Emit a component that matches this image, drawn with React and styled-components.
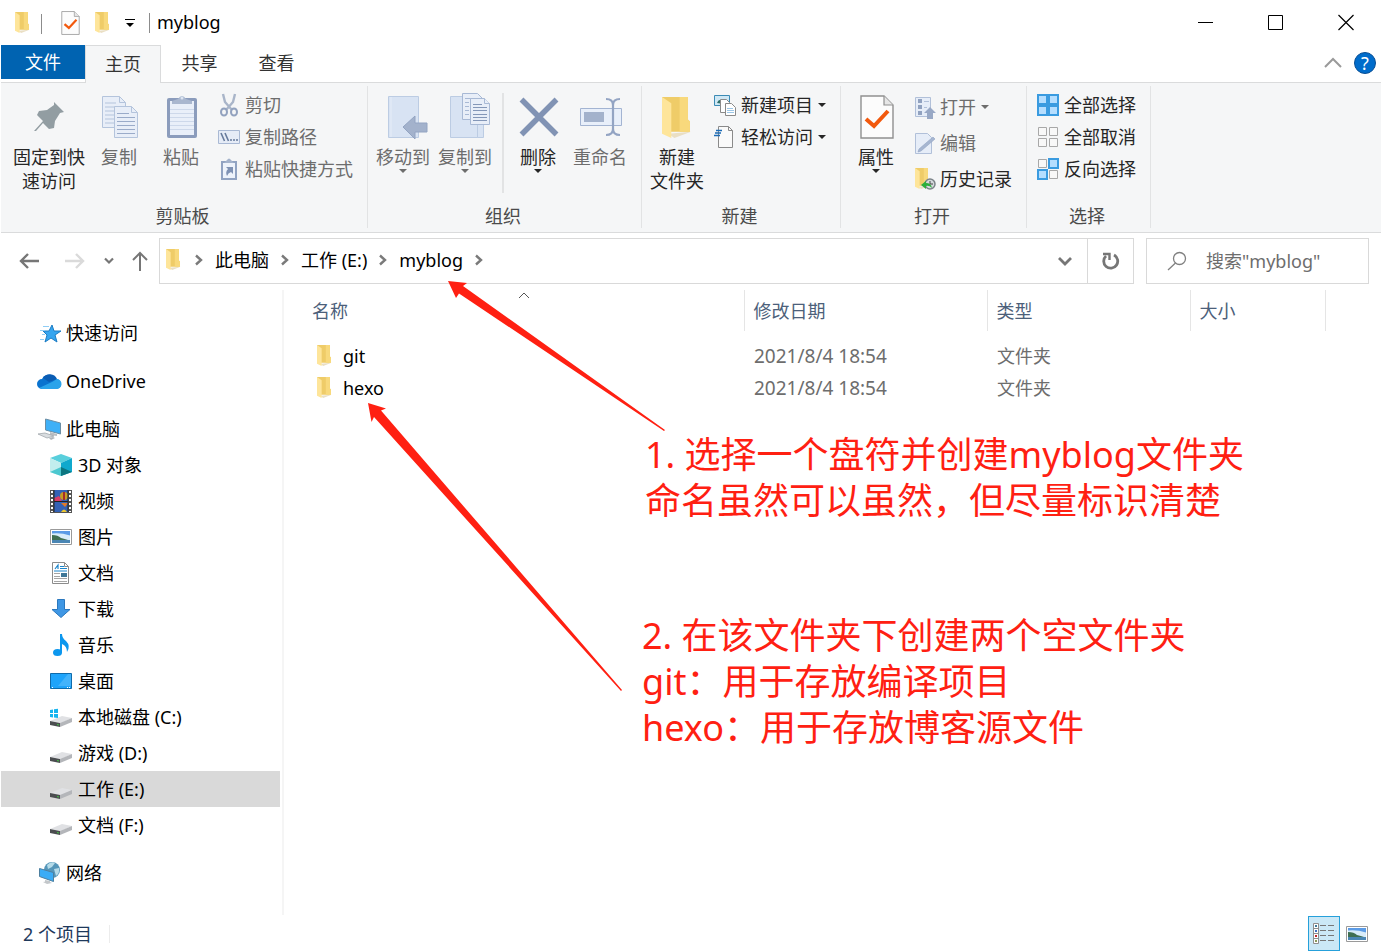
import React from 'react'
import styled, { createGlobalStyle, css } from 'styled-components'

const App = () => {
  return (
    <>
      <GlobalStyle />
      <Window>
        <TitleBar />
        <Tabs />
        <Ribbon />
        <AddressRow />
        <Body>
          <Sidebar />
          <FileList />
        </Body>
        <StatusBar />
        <Annotations />
      </Window>
    </>
  )
}

export default App

/* ---------- title bar ---------- */

const TitleBar = () => (
  <Title>
    <QuickAccess>
      <Folder width="15" height="22" />
      <Separator />
      <IconButton aria-label="属性" $width={19}><PropertiesIcon width="19" height="24" /></IconButton>
      <IconButton aria-label="新建文件夹" $width={15}><Folder width="15" height="22" /></IconButton>
      <IconButton aria-label="自定义快速访问工具栏" $width={10}>
        <svg width="10" height="10" viewBox="0 0 10 10">
          <path d="M0 1.5h10" stroke="#000" />
          <path d="M1 5h8L5 9z" />
        </svg>
      </IconButton>
    </QuickAccess>
    <Separator />
    <WindowName>myblog</WindowName>
    <WindowControls>
      <WindowButton aria-label="最小化">
        <svg width="16" height="16" viewBox="0 0 16 16"><path d="M0 8.5h15" stroke="#000" /></svg>
      </WindowButton>
      <WindowButton aria-label="最大化">
        <svg width="16" height="16" viewBox="0 0 16 16"><path d="M.5 1.5h14v14H.5z" fill="none" stroke="#000" /></svg>
      </WindowButton>
      <WindowButton aria-label="关闭">
        <svg width="16" height="16" viewBox="0 0 16 16"><path d="M.5 1l15 15M15.5 1l-15 15" stroke="#000" strokeWidth="1.2" /></svg>
      </WindowButton>
    </WindowControls>
  </Title>
)

const Tabs = () => (
  <TabRow>
    <FileTab>文件</FileTab>
    <Tab $active>主页</Tab>
    <Tab>共享</Tab>
    <Tab>查看</Tab>
    <TabTools>
      <IconButton aria-label="最小化功能区" $width={18}>
        <svg width="18" height="12" viewBox="0 0 18 12"><path d="M1 10l8-8 8 8" fill="none" stroke="#9a9a9a" strokeWidth="2" /></svg>
      </IconButton>
      <HelpButton aria-label="帮助">?</HelpButton>
    </TabTools>
  </TabRow>
)

/* ---------- ribbon ---------- */

const Big = ({ icon, label, second, arrow, disabled, width = 62 }) => (
  <BigButton disabled={disabled} $width={width}>
    <BigIcon width="48" height="48" viewBox="0 0 48 48">{icon}</BigIcon>
    <span>{label}</span>
    {second && <span>{second}</span>}
    {arrow && <Caret />}
  </BigButton>
)

const Small = ({ icon, label, arrow, disabled }) => (
  <SmallButton disabled={disabled}>
    <svg width="22" height="22" viewBox="0 0 22 22">{icon}</svg>
    <span>{label}</span>
    {arrow && <Caret />}
  </SmallButton>
)

const Caret = () => (
  <svg width="8" height="4" viewBox="0 0 8 4"><path d="M0 0h8L4 4z" fill="currentColor" /></svg>
)

const Ribbon = () => (
  <RibbonBar>
    <Group>
      <GroupBody $indent={9}>
        <Big width={78} icon={pinIcon} label="固定到快" second="速访问" />
        <Big disabled icon={copyIcon} label="复制" />
        <Big disabled icon={pasteIcon} label="粘贴" />
        <SmallColumn>
          <Small disabled icon={cutIcon} label="剪切" />
          <Small disabled icon={copyPathIcon} label="复制路径" />
          <Small disabled icon={shortcutIcon} label="粘贴快捷方式" />
        </SmallColumn>
      </GroupBody>
      <GroupName>剪贴板</GroupName>
    </Group>
    <Group>
      <GroupBody>
        <Big disabled arrow icon={moveToIcon} label="移动到" />
        <Big disabled arrow icon={copyToIcon} label="复制到" />
        <GroupDivider />
        <Big arrow icon={deleteIcon} label="删除" />
        <Big disabled icon={renameIcon} label="重命名" />
      </GroupBody>
      <GroupName>组织</GroupName>
    </Group>
    <Group>
      <GroupBody>
        <Big icon={newFolderIcon} label="新建" second="文件夹" />
        <SmallColumn>
          <Small arrow icon={newItemIcon} label="新建项目" />
          <Small arrow icon={easyAccessIcon} label="轻松访问" />
        </SmallColumn>
      </GroupBody>
      <GroupName>新建</GroupName>
    </Group>
    <Group>
      <GroupBody>
        <Big arrow icon={<PropertiesIcon x="8" y="2" width="34" height="44" />} label="属性" />
        <SmallColumn $loose>
          <Small disabled arrow icon={openIcon} label="打开" />
          <Small disabled icon={editIcon} label="编辑" />
          <Small icon={historyIcon} label="历史记录" />
        </SmallColumn>
      </GroupBody>
      <GroupName>打开</GroupName>
    </Group>
    <Group>
      <GroupBody>
        <SmallColumn>
          <Small icon={<Tiles on={[1, 1, 1, 1]} />} label="全部选择" />
          <Small icon={<Tiles on={[0, 0, 0, 0]} />} label="全部取消" />
          <Small icon={<Tiles on={[0, 1, 1, 0]} />} label="反向选择" />
        </SmallColumn>
      </GroupBody>
      <GroupName>选择</GroupName>
    </Group>
  </RibbonBar>
)

/* ---------- address bar ---------- */

const Crumb = () => (
  <svg width="8" height="12" viewBox="0 0 8 12"><path d="M1 1.5L6 6l-5 4.5" fill="none" stroke="#7a7a7a" strokeWidth="2.4" /></svg>
)

const AddressRow = () => (
  <Address>
    <NavButtons>
      <IconButton aria-label="后退" $width={21}>
        <svg width="21" height="18" viewBox="0 0 21 18"><path d="M20 9H2M9 2L2 9l7 7" fill="none" stroke="#767676" strokeWidth="2.4" /></svg>
      </IconButton>
      <IconButton aria-label="前进" $width={21}>
        <svg width="21" height="18" viewBox="0 0 21 18"><path d="M1 9h18M12 2l7 7-7 7" fill="none" stroke="#dadada" strokeWidth="2.4" /></svg>
      </IconButton>
      <IconButton aria-label="最近浏览的位置" $width={10}>
        <svg width="10" height="8" viewBox="0 0 10 8"><path d="M1 1.5l4 4 4-4" fill="none" stroke="#767676" strokeWidth="2.2" /></svg>
      </IconButton>
      <IconButton aria-label="上移" $width={18}>
        <svg width="18" height="20" viewBox="0 0 18 20"><path d="M9 20V2M2 9l7-7 7 7" fill="none" stroke="#767676" strokeWidth="2" /></svg>
      </IconButton>
    </NavButtons>
    <AddressBox>
      <Crumbs aria-label="路径">
        <Folder width="15" height="22" />
        <Crumb />
        <CrumbLink href="#pc">此电脑</CrumbLink>
        <Crumb />
        <CrumbLink href="#e">工作 (E:)</CrumbLink>
        <Crumb />
        <CrumbLink href="#myblog">myblog</CrumbLink>
        <Crumb />
      </Crumbs>
      <IconButton aria-label="历史地址" $width={44}>
        <svg width="14" height="10" viewBox="0 0 14 10"><path d="M1 2l6 6 6-6" fill="none" stroke="#767676" strokeWidth="2.8" /></svg>
      </IconButton>
      <Refresh aria-label="刷新">
        <svg width="18" height="18" viewBox="0 0 18 18">
          <path d="M12 3a7 7 0 1 1-8 1" fill="none" stroke="#767676" strokeWidth="2.8" />
          <path d="M1 2h6.5v6" fill="none" stroke="#767676" strokeWidth="2.4" />
        </svg>
      </Refresh>
    </AddressBox>
    <SearchBox>
      <svg width="20" height="20" viewBox="0 0 20 20">
        <circle cx="12.5" cy="7.5" r="6" fill="none" stroke="#808080" strokeWidth="1.3" />
        <path d="M8.500 12L1 19" stroke="#808080" strokeWidth="1.3" />
      </svg>
      <SearchInput aria-label="搜索" placeholder={'搜索"myblog"'} />
    </SearchBox>
  </Address>
)

/* ---------- sidebar ---------- */

const Sidebar = () => (
  <Nav aria-label="导航窗格">
    {places.map(group => (
      <NavGroup key={group[0].name}>
        {group.map((place, i) => (
          <Place key={place.name} href={`#${place.name}`} $nested={i > 0} $active={place.active}>
            <svg width="24" height="24" viewBox="0 0 24 24">{place.icon}</svg>
            {place.name}
          </Place>
        ))}
      </NavGroup>
    ))}
  </Nav>
)

/* ---------- file list ---------- */

const files = [
  { name: 'git', date: '2021/8/4 18:54', type: '文件夹' },
  { name: 'hexo', date: '2021/8/4 18:54', type: '文件夹' },
]

const FileList = () => (
  <Main>
    <Table>
      <colgroup>
        <Col $width={460} />
        <Col $width={243} />
        <Col $width={203} />
        <Col $width={135} />
        <col />
      </colgroup>
      <thead>
        <tr>
          <HeadCell $first>
            名称
            <SortMark width="12" height="7" viewBox="0 0 12 7"><path d="M1 6l5-5 5 5" fill="none" stroke="#555" /></SortMark>
          </HeadCell>
          <HeadCell>修改日期</HeadCell>
          <HeadCell>类型</HeadCell>
          <HeadCell>大小</HeadCell>
          <td />
        </tr>
      </thead>
      <tbody>
        <SpacerRow><td colSpan="5" /></SpacerRow>
        {files.map(file => (
          <tr key={file.name}>
            <NameCell>
              <FileName><Folder width="15" height="22" />{file.name}</FileName>
            </NameCell>
            <DateCell>{file.date}</DateCell>
            <Cell>{file.type}</Cell>
            <Cell />
            <td />
          </tr>
        ))}
      </tbody>
    </Table>
  </Main>
)

const StatusBar = () => (
  <Status>
    <Count>2 个项目</Count>
    <ViewButtons>
      <ViewButton aria-label="详细信息" $active>
        <svg width="22" height="22" viewBox="0 0 22 22">
          <path d="M.5.5h5v20h-5zM.5 5.5h5M.5 10.5h5M.5 15.5h5" fill="#fff" stroke="#8e8e8e" />
          <path d="M2 2h2v2H2z" fill="#3b7a9a" /><path d="M2 7h2v2H2z" fill="#3f6fc0" />
          <path d="M2 12h2v2H2z" fill="#c0272d" /><path d="M2 17h2v2H2z" fill="#8a9a5a" />
          <path d="M7 2.500h6M15 2.500h6M7 7.500h6M15 7.500h6M7 12.500h6M15 12.500h6M7 17.500h6M15 17.500h6" stroke="#777" />
        </svg>
      </ViewButton>
      <ViewButton aria-label="大图标">
        <svg width="22" height="16" viewBox="1 4 22 16">{photoIcon}</svg>
      </ViewButton>
    </ViewButtons>
  </Status>
)

const Annotations = () => (
  <>
    <Arrow $left={440} $top={270} width="240" height="180" viewBox="440 270 240 180">
      <path d="M448 281L467 283L463 286L665 430L664 431L459 293.5L456 298Z" />
    </Arrow>
    <Arrow $left={360} $top={395} width="280" height="310" viewBox="360 395 280 310">
      <path d="M368 403L386 408.500L381 410.500L622 690L621 691L374 417L371.500 422Z" />
    </Arrow>
    <Note $left={645} $top={432}>
      1. 选择一个盘符并创建myblog文件夹<br />
      命名虽然可以虽然，但尽量标识清楚
    </Note>
    <Note $left={642} $top={613}>
      2. 在该文件夹下创建两个空文件夹<br />
      git：用于存放编译项目<br />
      hexo：用于存放博客源文件
    </Note>
  </>
)

/* ---------- icons ---------- */

const Folder = props => (
  <svg viewBox="0 0 29 42" preserveAspectRatio="none" {...props}>
    <path d="M6 36l22-2-16 6z" fill="#eadfc4" />
    <path d="M0 0h25v22l2 2v10H5z" fill="#efcc68" />
    <path d="M17 0h8v22l2 2v10H17z" fill="#f8d97c" />
    <path d="M0 0l9 6v34L0 36z" fill="#fee59a" />
  </svg>
)

const PropertiesIcon = props => (
  <svg viewBox="0 0 34 44" {...props}>
    <path d="M1 1h23l9 9v33H1z" fill="#fcfcfc" stroke="#909090" strokeWidth="1.4" />
    <path d="M24 1v9h9" fill="#e6e6e6" stroke="#909090" strokeWidth="1.2" />
    <path d="M6 24l8 7 14-15" fill="none" stroke="#f2590d" strokeWidth="4" />
  </svg>
)

const Tiles = ({ on }) => on.map((lit, i) => {
  const x = (i % 2) * 11
  const y = i > 1 ? 11 : 0
  return lit
    ? <path key={i} d={`M${x + 1} ${y + 1}h9v9h-9z`} fill="#b5deff" stroke="#3a9be0" strokeWidth="2" />
    : <path key={i} d={`M${x + 1.5} ${y + 1.5}h8v8h-8z`} fill="#f8f8f8" stroke="#a8a8a8" />
})

const pinIcon = (
  <path d="M29 9l10 10-4 1-5 8-1 7-5 1-6-6-7 8H9l9-10-6-6 2-4 8-1 7-5z" fill="#929da2" />
)

const copyIcon = (
  <g stroke="#b4c4dc">
    <path d="M7.500 3.500h17l6 6v25h-23z" fill="#e8eef8" />
    <path d="M24.500 3.500v6h6M10 10h11M10 14h14M10 18h9M10 22h9M10 26h9M10 30h9" fill="none" />
    <path d="M19.500 13.500h17l6 6v25h-23z" fill="#e8eef8" />
    <path d="M36.500 13.500v6h6" fill="none" />
    <path d="M22 20.500h12M22 24.500h18M22 28.500h18M22 32.500h18M22 36.500h18M22 40.500h18" stroke="#9aabc9" />
  </g>
)

const pasteIcon = (
  <g>
    <rect x="10" y="5" width="30" height="40" rx="2" fill="#8b9cbc" />
    <path d="M13 8h24v34H13z" fill="#e9eff9" />
    <path d="M13 16.500h24M13 20.500h24M13 24.500h24M13 28.500h24M13 32.500h24M13 36.500h24" stroke="#cdd8ea" />
    <path d="M15 11V8l6-2q4-6 8 0l6 2v3z" fill="#a9b7cf" />
    <circle cx="25" cy="5" r="1.5" fill="#dce4f0" />
  </g>
)

const cutIcon = (
  <g fill="none" stroke="#92a2bf" strokeWidth="2">
    <path d="M5 0l2 8 7 8M17 0l-2 8-7 8" stroke="#a9b5c9" strokeWidth="2.4" />
    <ellipse cx="6" cy="18" rx="3" ry="3.5" />
    <ellipse cx="16" cy="18" rx="3" ry="3.5" />
  </g>
)

const copyPathIcon = (
  <g>
    <path d="M.5 4.500h21v13H.5z" fill="#e6ecf7" stroke="#a9b9d4" />
    <path d="M3 7l3.500 8M7 7l3.500 8" stroke="#667a9c" strokeWidth="1.6" />
    <path d="M12 14h2M15 14h2M18 14h2" stroke="#667a9c" strokeWidth="1.6" />
  </g>
)

const shortcutIcon = (
  <g>
    <path d="M4 4h14v17H4z" fill="#eef3fb" stroke="#91a3c2" strokeWidth="2" />
    <path d="M6 5l3-3q2-3 4 0l3 3z" fill="#a4b3cc" />
    <path d="M8 9h7v7l-2-2q-3 1-4 4-2-4 1-7z" fill="#7f92b4" />
  </g>
)

const paleFolder = <path d="M9.500 3.500h30v41h-30z" fill="#d8e3f3" stroke="#bccce3" />

const moveToIcon = (
  <g>
    {paleFolder}
    <path d="M12 4v40" stroke="#e6edf8" />
    <path d="M24 34l12-11v7h12v9H36v7z" fill="#a3b2cc" stroke="#93a4c2" />
  </g>
)

const copyToIcon = (
  <g>
    {paleFolder}
    <path d="M36.500 25.500h6v19h-6z" fill="#d8e3f3" stroke="#bccce3" />
    <g stroke="#a8b9d5" fill="#e8eef8">
      <path d="M21.500.500h15l5 5v21h-20z" />
      <path d="M24 5.500h11M24 9.500h4M24 13.500h4M24 17.500h4M24 21.500h4" />
      <path d="M29.500 5.500h14l5 5v21h-19z" />
      <path d="M43.500 5.500v5h5" />
      <path d="M32 11.500h9M32 14.500h14M32 17.500h14M32 21.500h14M32 24.500h14M32 27.500h14" stroke="#8497b8" />
    </g>
  </g>
)

const deleteIcon = <path d="M7.500 6.500l35 35M42.500 6.500l-35 35" stroke="#8193b4" strokeWidth="5.5" />

const renameIcon = (
  <g>
    <path d="M4.500 15.500h41v17h-41z" fill="#e8effa" stroke="#a3b4d2" />
    <path d="M8 19h20v10H8z" fill="#a3b2cc" />
    <path d="M30 6q7 0 7 6v24q0 6-7 6M44 6q-7 0-7 6v24q0 6 7 6" fill="none" stroke="#93a4c3" strokeWidth="2.2" />
  </g>
)

const newFolderIcon = <Folder x="9" y="4" width="30" height="43" />

const newItemIcon = (
  <g>
    <path d="M.5 1.500h15v10H.5z" fill="#cfe8f5" stroke="#3c8bb5" />
    <path d="M3 9q2-5 4-2l3 3z" fill="#2f6f6a" />
    <path d="M6.500 5.500h6l3 3v10h-9z" fill="#fff" stroke="#8a8a8a" />
    <path d="M11.500 9.500h6l4 4v8h-10z" fill="#fff" stroke="#8a8a8a" />
    <path d="M13 14.500h6M13 16.500h7M13 18.500h7" stroke="#9cc6e6" />
  </g>
)

const easyAccessIcon = (
  <g>
    <path d="M4.500.500h10l4 4v17h-14z" fill="#fafafa" stroke="#8a8a8a" />
    <path d="M14.500.500v4h4" fill="none" stroke="#8a8a8a" />
    <path d="M2 4.500h6M1 7h6M0 9.500h6" stroke="#1c6bb5" strokeWidth="1.4" />
  </g>
)

const openIcon = (
  <g>
    <path d="M2.500 1.500h15v19h-15z" fill="#e6edf8" stroke="#b1c0d9" />
    <path d="M5 3h4v4H5zM5 9h4v4H5zM5 15h4v4H5z" fill="#91a2c0" />
    <path d="M11 5.500h5M11 11.500h3" stroke="#b1c0d9" />
    <path d="M17 11l6 6h-3v6h-6v-6h-3z" fill="#98a8c5" />
  </g>
)

const editIcon = (
  <g>
    <path d="M2.500 1.500h12l4 4v16h-16z" fill="#e6edf8" stroke="#b1c0d9" />
    <path d="M20 5l2 2L8 19l-3 1 1-3z" fill="#a6b6d1" stroke="#91a3c2" strokeWidth=".6" />
  </g>
)

const historyIcon = (
  <g>
    <Folder x="2" y="0" width="15" height="22" />
    <circle cx="17" cy="16" r="5" fill="#d4d9dc" stroke="#7b8388" strokeWidth="1.5" />
    <path d="M17 13v3h3" fill="none" stroke="#444" />
    <path d="M8 17l5-4v2q5 0 6 5-3-3-6-2v3z" fill="#2cae3c" />
  </g>
)

const photoIcon = (
  <g>
    <path d="M1.500 4.500h21v15h-21z" fill="#fff" stroke="#9a9a9a" />
    <path d="M3 6h18v12H3z" fill="#5b9be6" />
    <path d="M3 8.500q9-1 18 2V15H3z" fill="#d8ecfa" />
    <path d="M3 10q6 0 9 3 4 1 7 2H3z" fill="#3f6f52" />
    <path d="M3 15h18v3H3z" fill="#4a86b4" />
  </g>
)

const driveIcon = (
  <g>
    <path d="M1 16l12-5 10 2-11 5z" fill="#e0e1e4" />
    <path d="M11 18l12-5v4l-12 5z" fill="#b4b6ba" />
    <path d="M1 16l10 2v4L1 20z" fill="#4b4d50" />
    <path d="M8 19l2 .5v1L8 20z" fill="#42c242" />
  </g>
)

const places = [
  [
    {
      name: '快速访问',
      icon: (
        <g>
          <path d="M15 4l2 6h7l-6 4 2 7-6-4-6 4 2-7-4-4h6z" fill="#35a5ef" stroke="#1c7cc4" />
          <path d="M6 5.500h6M3 9.500h5M5 13.500h3M3 18.500h4" stroke="#8fcdf5" />
        </g>
      ),
    },
  ],
  [
    {
      name: 'OneDrive',
      icon: (
        <g>
          <path d="M5 20a5 5 0 0 1 0-10 8 8 0 0 1 14 0 5 5 0 0 1 0 10z" fill="#0a73cf" />
          <path d="M6 9a8 8 0 0 1 14 1l-8 3z" fill="#0a5cb3" />
          <path d="M2 19l13-6 5-3a5 5 0 0 1-1 10H5z" fill="#2aa3ea" />
        </g>
      ),
    },
  ],
  [
    {
      name: '此电脑',
      icon: (
        <g>
          <path d="M8.500 2l15 4v11L8.500 13z" fill="#3fb0f7" stroke="#6b8ea5" />
          <path d="M13 15l7 2v2l-7-1z" fill="#b9bdc1" />
          <path d="M1 17l7-1 9 3-7 2z" fill="#d9dde0" stroke="#a2a8ad" strokeWidth=".8" />
          <path d="M12 21l4-1 2 1-4 2z" fill="#b0b5ba" />
        </g>
      ),
    },
    {
      name: '3D 对象',
      icon: (
        <g>
          <path d="M1 5l11-4 11 4-11 5z" fill="#59cfdc" />
          <path d="M1 5l11 5v13L1 19z" fill="#c1eeee" />
          <path d="M23 5l-11 5v13l11-4z" fill="#10a9cd" />
          <path d="M12 14v9l-11-4z" fill="#4cc8d0" />
          <path d="M12 14v9l11-4z" fill="#0d7680" />
        </g>
      ),
    },
    {
      name: '视频',
      icon: (
        <g>
          <path d="M1 1h22v23H1z" fill="#555" />
          <path d="M3 2v21M21 2v21" stroke="#fff" strokeWidth="2" strokeDasharray="2 2" />
          <path d="M5 1h14v11H5zM5 13h14v10H5z" fill="#3462b5" />
          <path d="M5 9l5-2 3 5H5z" fill="#d83d68" />
          <circle cx="15" cy="7" r="4" fill="#c99a24" />
          <path d="M14 3h2v8h-2z" fill="#a52c2c" />
          <path d="M12 14h7l-3 4z" fill="#e27a26" />
          <path d="M12 23q3-5 6 0z" fill="#edc730" />
          <path d="M5 12.500h14M5 1v22M19 1v22" stroke="#222" />
        </g>
      ),
    },
    { name: '图片', icon: photoIcon },
    {
      name: '文档',
      icon: (
        <g>
          <path d="M3.500 1.500h12l4 4v17h-16z" fill="#fff" stroke="#8c8c8c" />
          <path d="M15.500 1.500v4h4" fill="none" stroke="#8c8c8c" />
          <path d="M6 8l3-4v4M11 5.500h4M11 7.500h7M5 10h13" fill="none" stroke="#1b86cc" strokeWidth="1.2" />
          <path d="M5 12.500h6M5 15.500h6M5 17.500h13M5 20.500h13" stroke="#a5a5a5" />
          <path d="M12 12h6v4h-6z" fill="#3f7797" />
        </g>
      ),
    },
    {
      name: '下载',
      icon: <path d="M8.500 2.500h7v10H21l-9 8-9-8h5.500z" fill="#3f97e4" stroke="#2b78be" />,
    },
    {
      name: '音乐',
      icon: (
        <g fill="#0c97ee">
          <ellipse cx="8.5" cy="19.500" rx="4.5" ry="3.5" />
          <path d="M11 1h2q0 4 4 7 5 5 1 11 0-6-5-8v9h-2z" />
        </g>
      ),
    },
    {
      name: '桌面',
      icon: (
        <g>
          <path d="M1.500 4.500h21v15h-21z" fill="#1ea4fb" stroke="#0f6bab" />
          <path d="M22 5v12H9L19 5z" fill="#43b3fb" />
          <path d="M3 18.500h1M18 18.500h1M20 18.500h1" stroke="#fff" />
        </g>
      ),
    },
    {
      name: '本地磁盘 (C:)',
      icon: (
        <g>
          {driveIcon}
          <path d="M1 5l3-.5V8H1zM5 4.300l4-.6V8H5zM1 9h3v3.500L1 12zM5 9h4v4l-4-.5z" fill="#16b4ef" />
        </g>
      ),
    },
    { name: '游戏 (D:)', icon: driveIcon },
    { name: '工作 (E:)', icon: driveIcon, active: true },
    { name: '文档 (F:)', icon: driveIcon },
  ],
  [
    {
      name: '网络',
      icon: (
        <g>
          <circle cx="15" cy="9" r="8" fill="#5596b9" />
          <path d="M10 4q4-4 8-2l-3 4-4 2zM17 8l5-1q1 5-3 8z" fill="#b5dbe9" />
          <path d="M2.500 7.500l14 4v9l-14-5z" fill="#3aacf6" stroke="#4d7f9f" />
          <path d="M8 19l5 1v2l-5-1zM6 21l5-1 4 2-5 1z" fill="#c3c7ca" />
        </g>
      ),
    },
  ],
]

/* ---------- styles ---------- */

const GlobalStyle = createGlobalStyle`
  * {
    box-sizing: border-box;
  }
  body {
    margin: 0;
    background: #fff;
    font: 400 18px/24px "Noto Sans", "Noto Sans CJK SC", sans-serif;
    color: #000;
  }
  button, input {
    font: inherit;
    color: inherit;
    border: 0;
    padding: 0;
    background: none;
  }
  a {
    color: inherit;
    text-decoration: none;
  }
  svg {
    display: block;
    flex: none;
    overflow: visible;
  }
`

const Window = styled.div`
  position: relative;
  display: flex;
  flex-direction: column;
  min-height: 100vh;
  padding: 0 1px;
`

const Title = styled.header`
  display: flex;
  align-items: center;
  height: 45px;
  padding-bottom: 2px;
`

const QuickAccess = styled.div`
  display: flex;
  align-items: center;
  gap: 15px;
  padding: 2px 18px 0 14px;
`

const Separator = styled.span`
  width: 1px;
  height: 20px;
  margin: 2px 4px 0 -4px;
  background: #8c8c8c;
`

const WindowName = styled.span`
  margin-left: 3px;
`

const WindowControls = styled.div`
  display: flex;
  align-self: stretch;
  margin-left: auto;
`

const WindowButton = styled.button`
  display: flex;
  align-items: center;
  justify-content: center;
  width: 70px;
`

const IconButton = styled.button`
  display: flex;
  align-items: center;
  justify-content: center;
  width: ${props => props.$width}px;
`

const TabRow = styled.nav`
  display: flex;
  height: 38px;
  border-bottom: 1px solid #dadbdc;
`

const Tab = styled.button`
  width: 77px;
  padding-bottom: 2px;
  color: #333;
  ${props => props.$active && css`
    width: 76px;
    height: 38px;
    margin-bottom: -1px;
    background: #f5f6f7;
    border: 1px solid #dadbdc;
    border-bottom: 0;
  `}
`

const FileTab = styled.button`
  width: 84px;
  height: 34px;
  background: #0063b1;
  color: #fff;
`

const TabTools = styled.div`
  display: flex;
  align-items: center;
  gap: 12px;
  margin-left: auto;
  padding: 0 5px 2px 0;
`

const HelpButton = styled.button`
  width: 22px;
  height: 22px;
  border: 1px solid #0a4f94;
  border-radius: 50%;
  background: #006ccb;
  color: #fff;
  line-height: 20px;
`

const RibbonBar = styled.div`
  display: flex;
  height: 150px;
  padding: 3px 0 4px;
  background: #f5f6f7;
  border-bottom: 1px solid #dadbdc;
  color: #262626;
`

const Group = styled.section`
  display: flex;
  flex-direction: column;
  justify-content: space-between;
  border-right: 1px solid #e2e3e4;
`

const GroupBody = styled.div`
  display: flex;
  padding-left: ${props => props.$indent || 4}px;
  padding-right: 10px;
`

const GroupName = styled.div`
  padding-right: 3px;
  color: #4a4a4a;
  text-align: center;
`

const GroupDivider = styled.span`
  width: 2px;
  height: 100px;
  margin: 7px 3px 0 6px;
  background: #e2e3e4;
`

const BigButton = styled.button`
  display: flex;
  flex-direction: column;
  align-items: center;
  width: ${props => props.$width}px;
  padding-top: 7px;
  white-space: nowrap;
  &:disabled {
    color: #6d6d6d;
  }
`

const BigIcon = styled.svg`
  margin-bottom: 4px;
`

const SmallColumn = styled.div`
  display: flex;
  flex-direction: column;
  padding: 3px 4px 0 6px;
  > button {
    height: ${props => (props.$loose ? 36 : 32)}px;
  }
`

const SmallButton = styled.button`
  display: flex;
  align-items: center;
  gap: 5px;
  white-space: nowrap;
  &:disabled {
    color: #6d6d6d;
  }
`

const Address = styled.div`
  display: flex;
  align-items: center;
  height: 57px;
  padding: 0 12px 2px 18px;
`

const NavButtons = styled.div`
  display: flex;
  align-items: center;
  width: 140px;
  > :nth-child(2) { margin-left: 24px; }
  > :nth-child(3) { margin-left: 19px; }
  > :nth-child(4) { margin-left: 17px; }
`

const AddressBox = styled.div`
  display: flex;
  flex: 1;
  height: 46px;
  border: 1px solid #d9d9d9;
`

const Crumbs = styled.nav`
  display: flex;
  flex: 1;
  align-items: center;
  gap: 12px;
  padding: 0 6px 2px;
  > :first-child { margin-right: 2px; }
`

const CrumbLink = styled.a`
  white-space: nowrap;
`

const Refresh = styled.button`
  display: flex;
  align-items: center;
  justify-content: center;
  width: 46px;
  border-left: 1px solid #d9d9d9;
`

const SearchBox = styled.label`
  display: flex;
  align-items: center;
  gap: 19px;
  width: 223px;
  height: 46px;
  margin-left: 12px;
  padding: 0 8px 0 20px;
  border: 1px solid #d9d9d9;
`

const SearchInput = styled.input`
  flex: 1;
  min-width: 0;
  outline: 0;
  &::placeholder {
    color: #6d6d6d;
    opacity: 1;
  }
`

const Body = styled.div`
  display: flex;
  flex: 1;
`

const Nav = styled.nav`
  width: 283px;
  padding: 25px 2px 12px 0;
  border-right: 2px solid #f5f5f5;
`

const NavGroup = styled.div`
  margin-bottom: 12px;
`

const Place = styled.a`
  display: flex;
  align-items: center;
  gap: 5px;
  height: 36px;
  padding-left: ${props => (props.$nested ? 48 : 36)}px;
  background: ${props => (props.$active ? '#d9d9d9' : 'none')};
`

const Main = styled.main`
  flex: 1;
`

const Table = styled.table`
  width: 100%;
  table-layout: fixed;
  border-collapse: collapse;
`

const Col = styled.col`
  width: ${props => props.$width}px;
`

const HeadCell = styled.th`
  position: relative;
  height: 41px;
  padding: 0 0 0 ${props => (props.$first ? 28 : 9)}px;
  border-right: 1px solid #e5e5e5;
  color: #4c607a;
  font-weight: 400;
  text-align: left;
`

const SortMark = styled.svg`
  position: absolute;
  top: 2px;
  left: 234px;
`

const SpacerRow = styled.tr`
  height: 9px;
  td {
    padding: 0;
  }
`

const Cell = styled.td`
  height: 32px;
  padding: 0 0 0 10px;
  color: #6d6d6d;
`

const NameCell = styled(Cell)`
  padding-left: 33px;
  color: #000;
`

const DateCell = styled(Cell)`
  font-size: 19px;
`

const FileName = styled.div`
  display: flex;
  align-items: center;
  gap: 11px;
`

const Status = styled.footer`
  display: flex;
  align-items: center;
  justify-content: space-between;
  height: 37px;
  padding-left: 22px;
  color: #1e395b;
`

const Count = styled.span`
  padding-right: 17px;
  line-height: 18px;
  border-right: 1px solid #ececec;
`

const ViewButtons = styled.div`
  display: flex;
  padding-right: 7px;
`

const ViewButton = styled.button`
  display: flex;
  align-items: center;
  justify-content: center;
  width: ${props => (props.$active ? 32 : 34)}px;
  height: 35px;
  border: 1px solid ${props => (props.$active ? '#26a0da' : 'transparent')};
  background: ${props => (props.$active ? '#cbe8f6' : 'none')};
`

const Arrow = styled.svg`
  position: absolute;
  left: ${props => props.$left}px;
  top: ${props => props.$top}px;
  fill: #ff2012;
  pointer-events: none;
`

const Note = styled.p`
  position: absolute;
  left: ${props => props.$left}px;
  top: ${props => props.$top}px;
  margin: 0;
  color: #ff2012;
  font-size: 36px;
  line-height: 46px;
  white-space: nowrap;
`
